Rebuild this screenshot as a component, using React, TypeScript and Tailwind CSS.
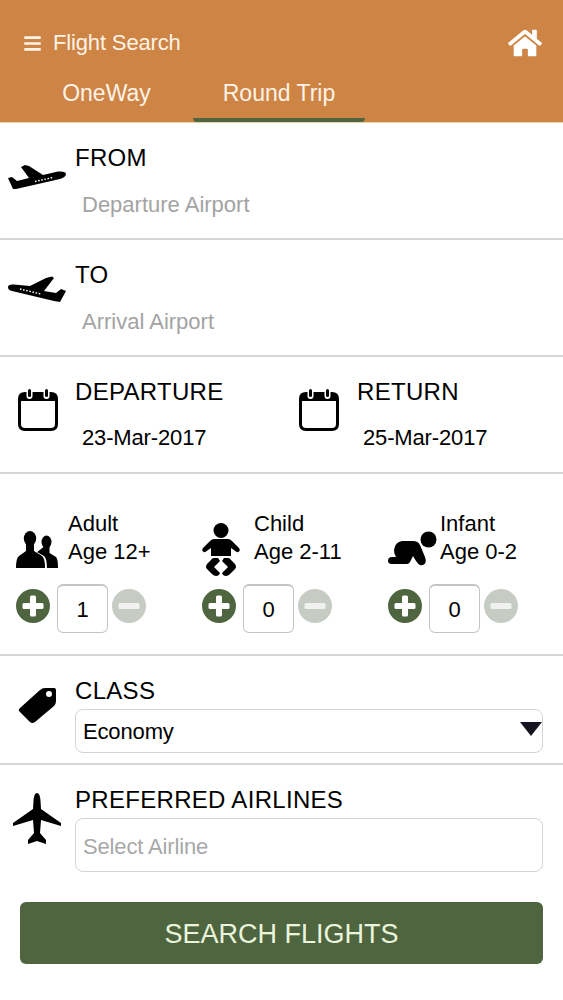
import { FaBars, FaHome } from 'react-icons/fa';

function TakeoffIcon() {
  return (
    <svg viewBox="0 0 58 26" className="w-[58px] h-[26px]">
      <path d="M0 15 L4 14 L9 18 L21 15 L13 4 L17 2 L21 3 L35 12 L50 8.5 Q58 8 58 11 Q58 14 52 16 L8 26 L5 26 Z" fill="#000" />
      <path d="M27 18.5 L45 14.5" stroke="#fff" strokeWidth="1.4" strokeDasharray="1.6 1.6" />
    </svg>
  );
}

function LandingIcon() {
  return (
    <svg viewBox="0 0 58 26" className="w-[58px] h-[26px]">
      <path d="M0 11 Q0 8 6 8.5 L22 10 L38 2 L44 0.5 L46 2 L36 15 L48 17 L53 13 L58 15 L52 26 L46 25 L4 15 Q0 14 0 11 Z" fill="#000" />
      <path d="M12 13 L33 18" stroke="#fff" strokeWidth="1.4" strokeDasharray="1.6 1.6" />
    </svg>
  );
}

function CalendarIcon() {
  return (
    <svg viewBox="0 0 40 43" className="w-[40px] h-[43px]">
      <path d="M7 5.5 H33 Q38.5 5.5 38.5 11 V36 Q38.5 41.5 33 41.5 H7 Q1.5 41.5 1.5 36 V11 Q1.5 5.5 7 5.5 Z" fill="none" stroke="#000" strokeWidth="3" />
      <path d="M6 5 H34 Q39 5 39 10 V13 H1 V10 Q1 5 6 5 Z" fill="#000" />
      <rect x="8.5" y="0" width="6" height="11" rx="3" fill="#fff" />
      <rect x="10" y="1" width="3" height="8" rx="1.5" fill="#000" />
      <rect x="25.5" y="0" width="6" height="11" rx="3" fill="#fff" />
      <rect x="27" y="1" width="3" height="8" rx="1.5" fill="#000" />
    </svg>
  );
}

function AdultIcon() {
  return (
    <svg viewBox="0 0 42 37" className="w-[42px] h-[37px]">
      <ellipse cx="30.5" cy="11" rx="5" ry="6.5" fill="#000" />
      <path d="M27.5 16 H33.5 V22 L40 26 Q42 28 42 37 H20 V22 Z" fill="#000" />
      <path d="M9 14 H19 V20 L28 25 Q31 27 31 39 H-2 V20 Z" fill="#fff" />
      <ellipse cx="14" cy="7.5" rx="6.2" ry="7.5" fill="#000" />
      <path d="M10 13 H18 V20 L26 25 Q29 27 29 37 H0 Q0 27 3 25 L10 20 Z" fill="#000" />
    </svg>
  );
}

function ChildIcon() {
  return (
    <svg viewBox="0 0 38 53" className="w-[38px] h-[53px]">
      <circle cx="19" cy="7.5" r="7.5" fill="#000" />
      <path d="M12 16 H26 Q28 16 30 18 L37 25 Q38.5 27 37 28.5 Q35.5 30 34 28.5 L29 25 V33 H9 V25 L4 28.5 Q2.5 30 1 28.5 Q-0.5 27 1 25 L8 18 Q10 16 12 16 Z" fill="#000" />
      <path d="M12 35 H16 L18 38 L12 44 L18 50 Q17 53 14 53 Q12 53 10 51 L5 46 Q3 44 5 41 L9 37 Q10 35 12 35 Z" fill="#000" />
      <path d="M26 35 H22 L20 38 L26 44 L20 50 Q21 53 24 53 Q26 53 28 51 L33 46 Q35 44 33 41 L29 37 Q28 35 26 35 Z" fill="#000" />
    </svg>
  );
}

function InfantIcon() {
  return (
    <svg viewBox="0 0 49 35" className="w-[49px] h-[35px]">
      <circle cx="40.5" cy="8.5" r="8" fill="#000" />
      <path d="M14 10 H25 Q30 10 32 14 L37 26 Q38.5 30 37 32.5 Q35 35 32 34 Q30 33 28 30 L25 25 L22 31 Q21 33 19 33 H4 Q0 33 0 30 Q0 26 4 26 H8 Q6 23 6 19 Q7 11 14 10 Z" fill="#000" />
    </svg>
  );
}

function TagIcon() {
  return (
    <svg viewBox="0 0 39 37" className="w-[39px] h-[37px]">
      <path fillRule="evenodd" d="M2 21 L22 3 Q24 1 27 1 L36 1 Q38 1 38 3 L38 14 Q38 17 36 19 L17 35 Q14 37 12 35 L1 24 Q0 23 2 21 Z M31 4 A3 3 0 1 0 31 10 A3 3 0 1 0 31 4 Z" fill="#000" />
    </svg>
  );
}

function PlaneIcon() {
  return (
    <svg viewBox="0 0 48 51" className="w-[48px] h-[51px]">
      <path d="M24 0 Q27 0 27.5 8 L28 16 L48 30 V33 L28 27 L27 40 L33 47 V51 L24 48 L15 51 V47 L21 40 L20 27 L0 33 V30 L20 16 L20.5 8 Q21 0 24 0 Z" fill="#000" />
    </svg>
  );
}

function RoundBtn({ kind }: { kind: 'plus' | 'minus' }) {
  const isPlus = kind === 'plus';
  return (
    <svg viewBox="0 0 34 34" className="w-[34px] h-[34px] shrink-0">
      <circle cx="17" cy="17" r="17" fill={isPlus ? '#4f6540' : '#c6cbc3'} />
      <rect x="6.5" y="14" width="21" height="6" rx="1.5" fill="#fff" opacity={isPlus ? 1 : 0.75} />
      {isPlus && <rect x="14" y="6.5" width="6" height="21" rx="1.5" fill="#fff" />}
    </svg>
  );
}

function Traveller({ icon, title, age, iconClass, gap }: { icon: React.ReactNode; title: string; age: string; iconClass: string; gap: string }) {
  return (
    <div className="w-[186px] pl-4">
      <div className="flex h-[56px]">
        <div className={iconClass}>{icon}</div>
        <div className={`${gap} text-[22px] leading-[28px] text-black`}>
          <div>{title}</div>
          <div>{age}</div>
        </div>
      </div>
      <div className="flex items-center mt-[12px]">
        <RoundBtn kind="plus" />
        <div className="w-[51px] h-[49px] mt-[6px] ml-[7px] mr-[4px] flex items-center justify-center rounded-md border border-[#c4c4c4] border-t-2 text-[22px] text-black">
          {title === 'Adult' ? '1' : '0'}
        </div>
        <RoundBtn kind="minus" />
      </div>
    </div>
  );
}

export default function App() {
  return (
    <div className="w-[563px] h-[1000px] overflow-hidden bg-white font-['Liberation_Sans',sans-serif] text-black">
      <div className="h-[123px] bg-[#cd8445] text-[#fdf3e6] border-b border-[#f0d0a8]">
        <div className="flex items-center justify-between pl-[23px] pr-[21px] pt-[16px] h-[70px]">
          <div className="flex items-center gap-[11px]">
            <FaBars className="w-[19px] h-[19px]" />
            <span className="text-[22px] leading-[28px] tracking-[-0.15px]">Flight Search</span>
          </div>
          <FaHome className="w-[34px] h-[34px] text-white" />
        </div>
        <div className="flex pl-[20px] h-[52px]">
          <div className="w-[173px] flex justify-center pt-[8px] text-[23px] leading-[30px]">OneWay</div>
          <div className="w-[172px] h-[52px] flex justify-center pt-[8px] text-[23px] leading-[30px] border-b-[4px] border-[#4f6540] rounded-b-sm">Round Trip</div>
        </div>
      </div>

      <div className="flex h-[117px] border-b-2 border-[#d6d6d6]">
        <div className="w-[75px] pl-2 pt-[40px] shrink-0"><TakeoffIcon /></div>
        <div className="pt-[21px]">
          <div className="text-[24px] leading-[28px] tracking-[0.3px]">FROM</div>
          <div className="mt-[19px] pl-[7px] text-[22px] leading-[28px] text-[#a3a3a3]">Departure Airport</div>
        </div>
      </div>

      <div className="flex h-[117px] border-b-2 border-[#d6d6d6]">
        <div className="w-[75px] pl-2 pt-[36px] shrink-0"><LandingIcon /></div>
        <div className="pt-[21px]">
          <div className="text-[24px] leading-[28px] tracking-[0.3px]">TO</div>
          <div className="mt-[19px] pl-[7px] text-[22px] leading-[28px] text-[#a3a3a3]">Arrival Airport</div>
        </div>
      </div>

      <div className="flex h-[117px] border-b-2 border-[#d6d6d6]">
        <div className="w-[282px] flex">
          <div className="w-[75px] pl-[18px] pt-[31px] shrink-0"><CalendarIcon /></div>
          <div className="pt-[21px]">
            <div className="text-[24px] leading-[28px] tracking-[0.3px]">DEPARTURE</div>
            <div className="mt-[18px] pl-[7px] text-[22px] leading-[28px] tracking-[-0.15px]">23-Mar-2017</div>
          </div>
        </div>
        <div className="w-[281px] flex">
          <div className="w-[75px] pl-[17px] pt-[31px] shrink-0"><CalendarIcon /></div>
          <div className="pt-[21px]">
            <div className="text-[24px] leading-[28px] tracking-[0.3px]">RETURN</div>
            <div className="mt-[18px] pl-[6px] text-[22px] leading-[28px] tracking-[-0.15px]">25-Mar-2017</div>
          </div>
        </div>
      </div>

      <div className="flex h-[182px] pt-[36px] border-b-2 border-[#d6d6d6]">
        <Traveller icon={<AdultIcon />} title="Adult" age="Age 12+" iconClass="pt-[21px] w-[42px]" gap="ml-[10px]" />
        <Traveller icon={<ChildIcon />} title="Child" age="Age 2-11" iconClass="pt-[13px] w-[38px]" gap="ml-[14px]" />
        <Traveller icon={<InfantIcon />} title="Infant" age="Age 0-2" iconClass="pt-[21px] w-[49px]" gap="ml-[3px]" />
      </div>

      <div className="flex h-[109px] border-b-2 border-[#d6d6d6]">
        <div className="w-[75px] pl-[18px] pt-[31px] shrink-0"><TagIcon /></div>
        <div className="pt-[21px] flex-1">
          <div className="text-[24px] leading-[28px] tracking-[0.3px]">CLASS</div>
          <div className="relative mt-[4px] w-[468px] h-[44px] flex items-center pl-[7px] rounded-lg border-[1.5px] border-[#d4d4d4] text-[22px] tracking-[-0.15px]">
            Economy
            <span className="absolute right-0 top-[12px] w-0 h-0 border-x-[11px] border-x-transparent border-t-[14px] border-t-[#15151f]" />
          </div>
        </div>
      </div>

      <div className="flex pb-[30px]">
        <div className="w-[75px] pl-[13px] pt-[28px] shrink-0"><PlaneIcon /></div>
        <div className="pt-[21px] flex-1">
          <div className="text-[24px] leading-[28px] tracking-[0.3px]">PREFERRED AIRLINES</div>
          <div className="mt-[4px] w-[468px] h-[54px] flex items-center pl-[7px] pt-[2px] rounded-lg border-[1.5px] border-[#d4d4d4] text-[22px] tracking-[-0.15px] text-[#a8a8a8]">
            Select Airline
          </div>
        </div>
      </div>

      <div className="px-[20px]">
        <div className="w-[523px] h-[62px] pt-[2px] flex items-center justify-center rounded-md bg-[#4f6540] text-[27px] text-[#eaf5dc]">
          SEARCH FLIGHTS
        </div>
      </div>
    </div>
  );
}
